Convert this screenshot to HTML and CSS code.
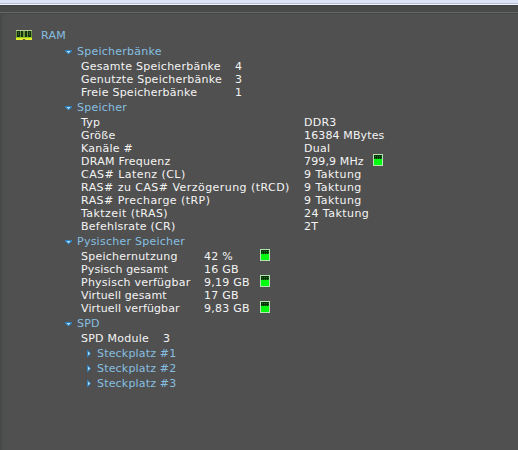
FILE: index.html
```
<!DOCTYPE html>
<html lang="de">
<head>
<meta charset="utf-8">
<title>RAM</title>
<link rel="stylesheet" href="styles.css">
</head>
<body>
<svg width="0" height="0" class="defs">
  <defs>
    <symbol id="down" viewBox="0 0 9 6"><path d="M1 1H8V2.5L4.5 5.5L1 2.5Z" fill="#2f7fbd"/><path d="M2.5 2H6.5L4.5 4.5Z" fill="#a5dcfc"/></symbol>
    <symbol id="right" viewBox="0 0 6 9"><path d="M1 1H2L5 4.5L2 8H1Z" fill="#2f7fbd"/><path d="M2 2.5V6.5L4.3 4.5Z" fill="#a5dcfc"/></symbol>
    <symbol id="gauge" viewBox="0 0 10 12"><path d="M0 0H10V12H0Z" fill="#b4e4b4"/><path d="M1 1H9V5H1Z" fill="#063006"/><path d="M2 2h1v1H2zM4 2h1v1H4zM6 2h1v1H6zM8 2h1v1H8zM2 4h1v1H2zM4 4h1v1H4zM6 4h1v1H6zM8 4h1v1H8z" fill="#168016"/><path d="M1 5H9V11H1Z" fill="#00fa10"/></symbol>
  </defs>
</svg>
<div class="strip"></div>
<main class="panel">
  <div class="root">
    <svg class="ram" viewBox="0 0 16 10"><path d="M0 0H16V9H0Z" fill="#6a9838"/><path d="M0 0H16V1H0Z" fill="#b4cc90"/><path d="M1 1H4V7H1ZM5 1H7V7H5ZM9 1H11V7H9ZM12 1H15V7H12Z" fill="#153012"/><path d="M2 2H3V5H2ZM13 2H14V5H13Z" fill="#385432"/><path d="M0 7H16V8H0Z" fill="#8fce20"/><path d="M0 8H16V10H9V9H7V10H0Z" fill="#e2ee28"/></svg>
    <span>RAM</span>
  </div>

  <h2><svg class="down"><use href="#down"/></svg><span>Speicherbänke</span></h2>
  <dl class="banks">
    <dt>Gesamte Speicherbänke</dt><dd>4</dd>
    <dt>Genutzte Speicherbänke</dt><dd>3</dd>
    <dt>Freie Speicherbänke</dt><dd>1</dd>
  </dl>

  <h2><svg class="down"><use href="#down"/></svg><span>Speicher</span></h2>
  <dl class="timing">
    <dt>Typ</dt><dd>DDR3</dd>
    <dt>Größe</dt><dd class="tight">16384 MBytes</dd>
    <dt>Kanäle #</dt><dd>Dual</dd>
    <dt>DRAM Frequenz</dt><dd class="tight"><span>799,9 MHz</span><svg class="gauge"><use href="#gauge"/></svg></dd>
    <dt class="wide">CAS# Latenz (CL)</dt><dd class="wide">9 Taktung</dd>
    <dt class="wide">RAS# zu CAS# Verzögerung (tRCD)</dt><dd class="wide">9 Taktung</dd>
    <dt class="wide">RAS# Precharge (tRP)</dt><dd class="wide">9 Taktung</dd>
    <dt class="wide">Taktzeit (tRAS)</dt><dd class="wide">24 Taktung</dd>
    <dt>Befehlsrate (CR)</dt><dd>2T</dd>
  </dl>

  <h2><svg class="down"><use href="#down"/></svg><span>Pysischer Speicher</span></h2>
  <dl class="usage">
    <dt>Speichernutzung</dt><dd><span>42 %</span><svg class="gauge"><use href="#gauge"/></svg></dd>
    <dt class="tight">Pysisch gesamt</dt><dd>16 GB</dd>
    <dt>Physisch verfügbar</dt><dd><span>9,19 GB</span><svg class="gauge"><use href="#gauge"/></svg></dd>
    <dt class="tight">Virtuell gesamt</dt><dd>17 GB</dd>
    <dt class="tight">Virtuell verfügbar</dt><dd><span>9,83 GB</span><svg class="gauge"><use href="#gauge"/></svg></dd>
  </dl>

  <h2><svg class="down"><use href="#down"/></svg><span>SPD</span></h2>
  <dl class="spd">
    <dt>SPD Module</dt><dd>3</dd>
  </dl>
  <ul>
    <li><svg class="right"><use href="#right"/></svg><span>Steckplatz #1</span></li>
    <li><svg class="right"><use href="#right"/></svg><span>Steckplatz #2</span></li>
    <li><svg class="right"><use href="#right"/></svg><span>Steckplatz #3</span></li>
  </ul>
</main>
</body>
</html>
```
FILE: styles.css
```
* { box-sizing: border-box; margin: 0; padding: 0; }
html, body { height: 100%; overflow: hidden; }
body {
  display: flex;
  flex-direction: column;
  background: #505050;
  color: #f4f4f4;
  font: 11px/13px Verdana, "DejaVu Sans", sans-serif;
  letter-spacing: 0.25px;
  white-space: nowrap;
}
svg { display: block; flex: none; }
.defs { position: absolute; }
.strip {
  flex: none;
  height: 14px;
  background: linear-gradient(#dde4f7 0 3px, #b5bdd0 3px 4px, #f4f7ff 4px 5px, #3f4242 5px 6px, #484a4a 6px 12px, #686866 12px 13px, #444646 13px 14px);
}
.panel {
  flex: 1;
  padding: 13px 0 0 15px;
  background: linear-gradient(90deg, #454747 0, #4b4c4c 2px, #505050 6px);
}
.root { display: flex; align-items: center; height: 16px; padding-left: 1px; color: #86bfe0; }
.ram { width: 16px; height: 10px; margin-right: 9px; }
h2 {
  display: flex;
  align-items: center;
  height: 17px;
  padding-left: 49px;
  font-size: 11px;
  font-weight: normal;
  color: #86bfe0;
}
.down { width: 9px; height: 6px; margin-right: 4px; }
dl { display: grid; grid-auto-rows: 13px; padding-left: 66px; }
dd { display: flex; align-items: center; position: relative; }
.wide { letter-spacing: 0.45px; }
.tight { letter-spacing: 0.13px; }
.banks { grid-template-columns: 154px auto; }
.timing { grid-template-columns: 223px auto; }
.usage { grid-template-columns: 123px auto; }
.spd { grid-template-columns: 82px auto; }
.gauge { position: absolute; top: -1px; width: 10px; height: 12px; }
.timing .gauge { left: 69px; }
.usage .gauge { left: 56px; }
ul { list-style: none; padding: 1px 0 0 71px; }
li { display: flex; align-items: center; height: 15px; color: #86bfe0; letter-spacing: 0.18px; }
.right { width: 6px; height: 9px; margin-right: 5px; }
```
